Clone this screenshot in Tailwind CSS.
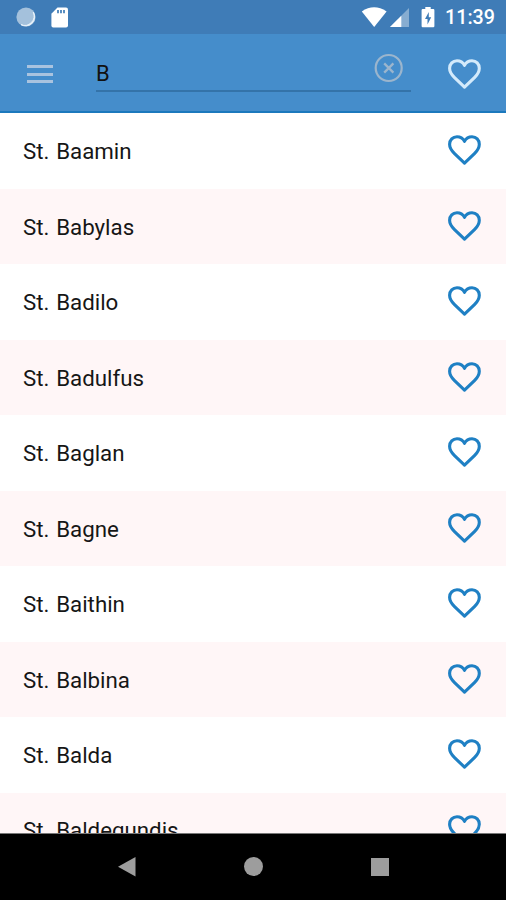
<!DOCTYPE html>
<html lang="en">
<head>
<meta charset="utf-8">
<title>Saints</title>
<script src="https://cdn.jsdelivr.net/npm/@tailwindcss/browser@4"></script>
</head>
<body class="w-[506px] h-[900px] overflow-hidden bg-white text-[#161616]" style="font-family: Roboto, sans-serif">
<svg class="hidden">
  <symbol id="heart" viewBox="0 0 34 32">
    <path d="M17.5 29.2 L7.3 19.4 C4.2 16.3 2.6 14 2.6 10.3 C2.6 6 5.8 2.8 10 2.8 C13.2 2.8 15.9 4.4 17.5 7.3 C19.1 4.4 21.8 2.8 25 2.8 C29.2 2.8 32.3 6 32.3 10.3 C32.3 14 30.8 16.3 27.7 19.4 Z" fill="none" stroke="currentColor" stroke-width="3.1" stroke-linejoin="round"/>
  </symbol>
</svg>
<div class="flex h-full flex-col">
  <div class="flex h-[34px] shrink-0 items-center bg-[#3f7cb7] pl-[15px] pr-[11px] text-white">
    <svg class="h-[22px] w-[22px]" viewBox="0 0 22 22"><circle cx="11" cy="11" r="9.6" fill="#a4c1dc"/><path d="M18.3 6.2A9 9 0 0 1 6 18.6A9.4 9.4 0 0 0 18.3 6.2Z" fill="#e8f2fa" stroke="#e8f2fa"/></svg>
    <svg class="ml-[14px] h-[22px] w-[18px]" viewBox="0 0 18 22"><path d="M6.5 1.5H15Q17 1.5 17 3.5V19.5Q17 21.5 15 21.5H2.2Q.4 21.5 .4 19.5V7.7Z" fill="#fff"/><path d="M7 4V7.3M10 4V7.3M13 4V7.3" stroke="#3f7cb7" stroke-width="1.7"/></svg>
    <svg class="ml-auto h-[22px] w-[26px]" viewBox="0 0 26 22"><path d="M.8 5.4Q13-3 25.6 5.4L13.2 21Z" fill="#fff"/></svg>
    <svg class="ml-[2px] h-[22px] w-[21px]" viewBox="0 0 21 22"><path d="M20 2V21H1Z" fill="#87add1"/><path d="M12.3 9.7V21H1Z" fill="#fff"/></svg>
    <svg class="ml-[11px] h-[22px] w-[14px]" viewBox="0 0 14 22"><path d="M4.3 1H9.7V3H12.3Q13.4 3 13.4 4.2V20Q13.4 21.3 12.3 21.3H1.7Q.6 21.3 .6 20V4.2Q.6 3 1.7 3H4.3Z" fill="#fff"/><path d="M7.8 6L4 13H6.5V18.5L10.2 11.3H7.8Z" fill="#3f7cb7"/></svg>
    <span class="ml-[10px] w-[50px] whitespace-nowrap text-[19.7px] font-medium leading-[34px] pt-[2px]">11:39</span>
  </div>
  <div class="flex h-[79px] shrink-0 border-b-2 border-[#1c79bd] bg-[#458dcb]">
    <div class="mt-[31px] ml-[27px] flex h-[18px] w-[26px] flex-col justify-between">
      <span class="h-[3px] bg-[#a9c3df]"></span><span class="h-[3px] bg-[#a9c3df]"></span><span class="h-[3px] bg-[#a9c3df]"></span>
    </div>
    <div class="ml-[43px] flex h-[58px] w-[315px] justify-between border-b-2 border-[#3473a9] text-[#111]">
      <span class="pt-[27px] text-[22px] leading-[26px]">B</span>
      <svg class="mt-[19px] mr-[7px] h-[30px] w-[30px]" viewBox="0 0 30 30" fill="none" stroke="#9bb5cd" stroke-width="2.2"><circle cx="14.7" cy="15" r="13"/><path d="M10.2 10.4L19.4 19.6M19.4 10.4L10.2 19.6" stroke-width="2.3"/></svg>
    </div>
    <svg class="mt-[24px] ml-[36px] h-[32px] w-[34px] text-[#d3eafb]"><use href="#heart"/></svg>
  </div>
  <ul class="min-h-0 flex-1 overflow-hidden text-[22.3px] leading-[26px] [word-spacing:1.2px]">
    <li class="flex h-[75.5px] justify-between bg-white pl-[23px] pr-[25px]"><span class="pt-[25px]">St. Baamin</span><svg class="mt-[21px] h-[32px] w-[34px] text-[#1f80c4]"><use href="#heart"/></svg></li>
    <li class="flex h-[75.5px] justify-between bg-[#fff6f7] pl-[23px] pr-[25px]"><span class="pt-[25px]">St. Babylas</span><svg class="mt-[21px] h-[32px] w-[34px] text-[#1f80c4]"><use href="#heart"/></svg></li>
    <li class="flex h-[75.5px] justify-between bg-white pl-[23px] pr-[25px]"><span class="pt-[25px]">St. Badilo</span><svg class="mt-[21px] h-[32px] w-[34px] text-[#1f80c4]"><use href="#heart"/></svg></li>
    <li class="flex h-[75.5px] justify-between bg-[#fff6f7] pl-[23px] pr-[25px]"><span class="pt-[25px]">St. Badulfus</span><svg class="mt-[21px] h-[32px] w-[34px] text-[#1f80c4]"><use href="#heart"/></svg></li>
    <li class="flex h-[75.5px] justify-between bg-white pl-[23px] pr-[25px]"><span class="pt-[25px]">St. Baglan</span><svg class="mt-[21px] h-[32px] w-[34px] text-[#1f80c4]"><use href="#heart"/></svg></li>
    <li class="flex h-[75.5px] justify-between bg-[#fff6f7] pl-[23px] pr-[25px]"><span class="pt-[25px]">St. Bagne</span><svg class="mt-[21px] h-[32px] w-[34px] text-[#1f80c4]"><use href="#heart"/></svg></li>
    <li class="flex h-[75.5px] justify-between bg-white pl-[23px] pr-[25px]"><span class="pt-[25px]">St. Baithin</span><svg class="mt-[21px] h-[32px] w-[34px] text-[#1f80c4]"><use href="#heart"/></svg></li>
    <li class="flex h-[75.5px] justify-between bg-[#fff6f7] pl-[23px] pr-[25px]"><span class="pt-[25px]">St. Balbina</span><svg class="mt-[21px] h-[32px] w-[34px] text-[#1f80c4]"><use href="#heart"/></svg></li>
    <li class="flex h-[75.5px] justify-between bg-white pl-[23px] pr-[25px]"><span class="pt-[25px]">St. Balda</span><svg class="mt-[21px] h-[32px] w-[34px] text-[#1f80c4]"><use href="#heart"/></svg></li>
    <li class="flex h-[75.5px] justify-between bg-[#fff6f7] pl-[23px] pr-[25px]"><span class="pt-[24.4px]">St. Baldegundis</span><svg class="mt-[21px] h-[32px] w-[34px] text-[#1f80c4]"><use href="#heart"/></svg></li>
  </ul>
  <div class="flex h-[67px] shrink-0 items-center border-t border-[#777] bg-black pl-[117px]">
    <svg class="h-[20px] w-[20px]" viewBox="0 0 20 20"><path d="M1 9.7L18.5 0V19.4Z" fill="#9d9d9d"/></svg>
    <span class="ml-[107px] mb-px h-[19px] w-[19px] rounded-full bg-[#9d9d9d]"></span>
    <span class="ml-[108px] h-[18px] w-[18px] bg-[#9d9d9d]"></span>
  </div>
</div>
</body>
</html>
